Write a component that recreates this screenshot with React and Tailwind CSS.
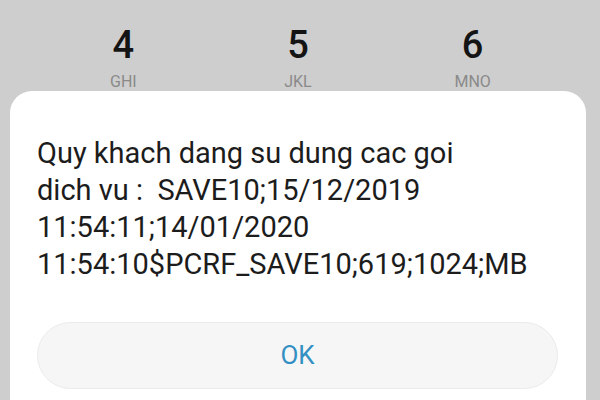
import React from 'react'

const keys = [
    { num: '4', letters: 'GHI' },
    { num: '5', letters: 'JKL' },
    { num: '6', letters: 'MNO' },
]

const lines = [
    'Quy khach dang su dung cac goi',
    'dich vu :  SAVE10;15/12/2019',
    '11:54:11;14/01/2020',
    '11:54:10$PCRF_SAVE10;619;1024;MB',
]

const App = () => {
    return (
        <div className="w-[600px] h-[400px] overflow-hidden bg-[#cecece] font-['Roboto',sans-serif]">
            {/* dial pad row behind the dialog */}
            <div className="h-[91px] grid grid-cols-3 pl-[36px] pr-[40px] pt-[26px]">
                {keys.map((k) => (
                    <div key={k.num} className="flex flex-col items-center">
                        <span className="text-[38px] leading-none font-medium text-[#141414]">{k.num}</span>
                        <span className="mt-[10px] text-[16px] leading-none text-[#8a8a8a]">{k.letters}</span>
                    </div>
                ))}
            </div>

            {/* message dialog */}
            <div className="ml-[10px] w-[576px] h-[340px] bg-white rounded-[22px] pl-[27px] pr-[28px] pt-[44px]">
                <div className="text-[29px] leading-[37px] text-[#1c1c1c] whitespace-pre">
                    {lines.map((line, i) => (
                        <div key={i}>{line}</div>
                    ))}
                </div>
                <button className="mt-[39px] w-[521px] h-[67px] rounded-full bg-[#f6f6f6] border border-[#ebebeb] flex items-center justify-center">
                    <span className="text-[26px] text-[#3390c2]">OK</span>
                </button>
            </div>
        </div>
    )
}

export default App
